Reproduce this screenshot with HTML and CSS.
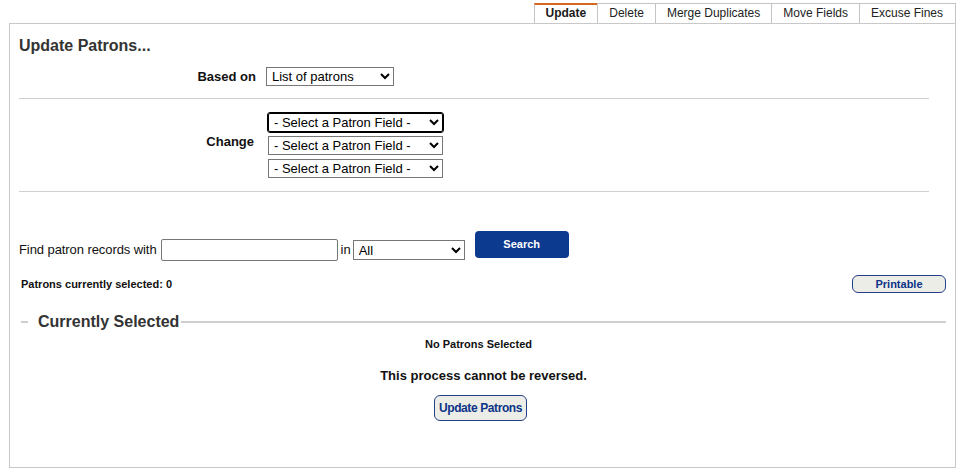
FILE: index.html
```html
<!DOCTYPE html>
<html lang="en">
<head>
<meta charset="utf-8">
<title>Update Patrons</title>
<link rel="stylesheet" href="styles.css">
</head>
<body>
<div class="page">
  <ul class="tabs">
    <li class="tab active">Update</li>
    <li class="tab">Delete</li>
    <li class="tab">Merge Duplicates</li>
    <li class="tab">Move Fields</li>
    <li class="tab last">Excuse Fines</li>
  </ul>
  <div class="panel">
    <h1 class="title">Update Patrons...</h1>

    <div class="form-row based">
      <label class="form-label">Based on</label>
      <select class="sel sel-based"><option>List of patrons</option></select>
    </div>
    <hr class="rule rule-1">

    <div class="form-row change">
      <label class="form-label">Change</label>
      <div class="sel-stack">
        <select class="sel sel-field is-focused"><option>- Select a Patron Field -</option></select>
        <select class="sel sel-field"><option>- Select a Patron Field -</option></select>
        <select class="sel sel-field"><option>- Select a Patron Field -</option></select>
      </div>
    </div>
    <hr class="rule rule-2">

    <div class="find-row">
      <span class="find-text">Find patron records with</span>
      <input class="find-input" type="text">
      <span class="find-in">in</span>
      <select class="sel sel-in"><option>All</option></select>
      <button class="btn-search" type="button">Search</button>
    </div>

    <div class="status-row">
      <span class="status-text">Patrons currently selected: 0</span>
      <button class="btn-light btn-print" type="button">Printable</button>
    </div>

    <fieldset class="selected">
      <legend class="selected-legend">Currently Selected</legend>
      <p class="none-text">No Patrons Selected</p>
      <p class="warn-text">This process cannot be reversed.</p>
      <div class="action">
        <button class="btn-light btn-update" type="button">Update Patrons</button>
      </div>
    </fieldset>
  </div>
</div>
</body>
</html>
```
FILE: styles.css
```css
* { box-sizing: border-box; }
html, body { margin: 0; padding: 0; background: #fff; }
body {
  font-family: "Liberation Sans", Arial, sans-serif;
  font-size: 13px;
  color: #111;
}
.page { padding: 3px 10px 0 9px; }

.tabs {
  list-style: none;
  margin: 0;
  padding: 0;
  display: flex;
  justify-content: flex-end;
}
.tab {
  height: 20px;
  line-height: 18px;
  padding: 0 11px;
  font-size: 12px;
  color: #222;
  border-top: 1px solid #c4c4c4;
  border-left: 1px solid #c4c4c4;
  background: #fff;
}
.tab.last { border-right: 1px solid #c4c4c4; padding: 0 12px 0 11px; }
.tab.active {
  border-top: 2px solid #d2691e;
  line-height: 17px;
  font-weight: bold;
  color: #1a1a1a;
}

.panel {
  border: 1px solid #c8c8c8;
  height: 445px;
  padding: 12px 9px 0 9px;
}
.title {
  margin: 0;
  font-size: 16px;
  line-height: 20px;
  font-weight: bold;
  color: #333;
}

.form-row { display: flex; }
.form-label {
  width: 237px;
  text-align: right;
  font-weight: bold;
  font-size: 13px;
  color: #111;
}
.based { margin-top: 11px; align-items: center; }
.based .sel { margin-left: 10px; }

.sel {
  font-family: "Liberation Sans", Arial, sans-serif;
  font-size: 13px;
  height: 19px;
  border: 1px solid #767676;
  border-radius: 0;
  background: #fff;
  color: #000;
  padding: 0 0 0 1px;
}
.sel-based { width: 128px; }

.rule {
  border: 0;
  border-top: 1px solid #d0d0d0;
  margin: 12px 17px 0 0;
  height: 0;
}
.rule-1 { margin-top: 12px; }
.rule-2 { margin-top: 13px; }

.change { margin-top: 14px; align-items: center; }
.change .form-label { width: 235px; padding-bottom: 9px; }
.sel-stack {
  display: flex;
  flex-direction: column;
  gap: 4px;
  margin-left: 14px;
}
.sel-field { width: 175px; }
.sel-field.is-focused {
  border: 1px solid #000;
  outline: 1px solid #000;
  border-radius: 2px;
}

.find-row {
  display: flex;
  align-items: flex-end;
  margin-top: 39px;
}
.find-text { line-height: 20px; margin-bottom: 1px; letter-spacing: -0.08px; }
.find-input {
  width: 177px;
  height: 22px;
  margin: 0 3px 0 4px;
  border: 1px solid #767676;
  border-radius: 2px;
  font-family: "Liberation Sans", Arial, sans-serif;
  font-size: 13px;
}
.find-in { line-height: 20px; margin-bottom: 1px; }
.sel-in { width: 112px; height: 20px; margin-left: 2px; margin-bottom: 1px; }
.btn-search {
  width: 94px;
  height: 27px;
  margin-left: 10px;
  margin-bottom: 3px;
  background: #0b3a8e;
  color: #fff;
  border: 0;
  border-radius: 4px;
  font-family: "Liberation Sans", Arial, sans-serif;
  font-size: 11px;
  font-weight: bold;
  padding: 0 0 2px 0;
}

.status-row {
  display: flex;
  justify-content: space-between;
  align-items: center;
  margin-top: 14px;
  padding-left: 2px;
}
.status-text { font-size: 11px; font-weight: bold; color: #111; }

.btn-light {
  background: #ecede7;
  color: #0d3488;
  border: 1px solid #25408a;
  border-radius: 6px;
  font-family: "Liberation Sans", Arial, sans-serif;
  font-weight: bold;
  padding: 0;
}
.btn-print { width: 94px; height: 18px; font-size: 11px; }

.selected {
  margin: 20px 0 0 2px;
  padding: 0;
  border: 0;
  border-top: 2px solid #cfcfcf;
  min-width: 0;
}
.selected-legend {
  margin-left: 7px;
  padding: 0 2px 0 10px;
  font-size: 16px;
  font-weight: bold;
  color: #333;
  line-height: 18px;
}
.none-text {
  margin: 6px 0 0 0;
  text-align: center;
  font-size: 11px;
  font-weight: bold;
  line-height: 14px;
  color: #111;
  padding-right: 10px;
}
.warn-text {
  margin: 17px 0 0 0;
  text-align: center;
  font-size: 13px;
  font-weight: bold;
  line-height: 16px;
  color: #111;
}
.action { display: flex; justify-content: center; margin-top: 11px; padding-right: 6px; }
.btn-update {
  width: 93px;
  height: 26px;
  font-size: 12px;
  letter-spacing: -0.4px;
}
```
